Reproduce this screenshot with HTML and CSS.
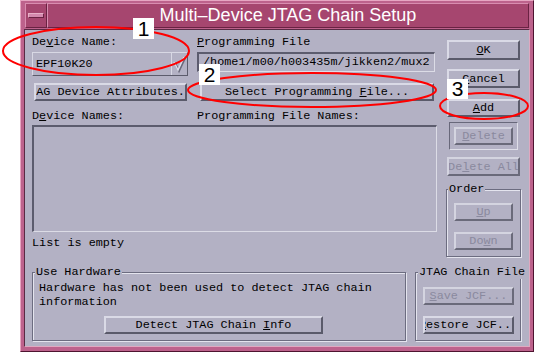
FILE: index.html
```html
<!DOCTYPE html>
<html lang="en">
<head>
    <meta charset="UTF-8">
    <title>Multi-Device JTAG Chain Setup</title>
    <link rel="stylesheet" href="styles.css">
</head>
<body>

<div class="window">
    <div class="titlebar">
        <div class="menu-btn"><span class="menu-bar"></span></div>
        <div class="title">Multi–Device JTAG Chain Setup</div>
    </div>
    <div class="client">
        <div class="top">
            <div class="main">
                <div class="pair">
                    <span>De<u>v</u>ice Name:</span>
                    <span><u>P</u>rogramming File</span>
                </div>
                <div class="pair fields">
                    <div class="combo">
                        <span class="combo-text">EPF10K20</span>
                        <span class="combo-arrow">
                            <svg width="13" height="20" viewBox="0 0 13 20">
                                <polyline points="2,9 6,17 12,4" fill="none" stroke="#6a6a7c" stroke-width="2"/>
                                <polyline points="1,8 5,16 11,3" fill="none" stroke="#dcdce8" stroke-width="1.5"/>
                            </svg>
                        </span>
                    </div>
                    <div class="field">/home1/m00/h003435m/jikken2/mux2</div>
                </div>
                <div class="pair actions">
                    <button class="btn attr"><span>JTAG Device Attributes...</span></button>
                    <button class="btn select"><span>Select Programming <u>F</u>ile...</span></button>
                </div>
                <div class="pair names">
                    <span>D<u>e</u>vice Names:</span>
                    <span>Programming File Names:</span>
                </div>
                <div class="listbox"></div>
                <div class="status">List is empty</div>
            </div>
            <div class="side">
                <button class="btn ok"><span><u>O</u>K</span></button>
                <button class="btn cancel"><span><u>C</u>ancel</span></button>
                <button class="btn add"><span><u>A</u>dd</span></button>
                <div class="default-frame">
                    <button class="btn" disabled><span><u>D</u>elete</span></button>
                </div>
                <button class="btn delete-all" disabled><span>De<u>l</u>ete All</span></button>
                <fieldset class="group order">
                    <legend>Order</legend>
                    <button class="btn up" disabled><span><u>U</u>p</span></button>
                    <button class="btn down" disabled><span>Do<u>w</u>n</span></button>
                </fieldset>
            </div>
        </div>
        <div class="bottom">
            <fieldset class="group hw">
                <legend>Use Hardware</legend>
                <p>Hardware has not been used to detect JTAG chain information</p>
                <button class="btn detect"><span>Detect JTAG Chain <u>I</u>nfo</span></button>
            </fieldset>
            <fieldset class="group jcf">
                <legend>JTAG Chain File</legend>
                <button class="btn save" disabled><span><u>S</u>ave JCF...</span></button>
                <button class="btn restore"><span><u>R</u>estore JCF...</span></button>
            </fieldset>
        </div>
    </div>
</div>

<svg class="marks" width="536" height="356" viewBox="0 0 536 356">
    <g fill="none" stroke="#ff0000" stroke-width="2">
        <ellipse cx="96" cy="51" rx="93" ry="24"/>
        <ellipse cx="312" cy="90" rx="124" ry="17"/>
        <ellipse cx="484" cy="106" rx="44" ry="13"/>
    </g>
    <g class="tag">
        <rect x="133" y="18" width="21" height="21"/>
        <text x="143.5" y="36">1</text>
        <rect x="199" y="64" width="21" height="21"/>
        <text x="209.5" y="82">2</text>
        <rect x="447" y="79" width="21" height="20"/>
        <text x="457.5" y="96">3</text>
    </g>
</svg>

</body>
</html>
```

FILE: styles.css
```css
body {
    margin: 0;
    background: #fff;
    font-family: "Liberation Mono", "DejaVu Sans Mono", monospace;
    font-size: 11.8px;
    line-height: 14px;
    color: #000;
}
u {
    text-underline-offset: 1px;
}
.window {
    width: 514px;
    height: 352px;
    margin-left: 20px;
    box-sizing: border-box;
    background: #bd628c;
    border: 1px solid;
    border-color: #e6a6c2 #4e1430 #4e1430 #e6a6c2;
    padding: 2px 3px 4px;
    display: flex;
    flex-direction: column;
}
.titlebar {
    height: 25px;
    margin: 0 1px 1px;
    display: flex;
    background: #a6466f;
}
.menu-btn {
    width: 22px;
    box-sizing: border-box;
    border: 1px solid;
    border-color: #d98db0 #6a2242 #6a2242 #d98db0;
    display: flex;
    align-items: center;
    justify-content: center;
}
.menu-bar {
    width: 14px;
    height: 3px;
    background: #d48aae;
    border: 1px solid;
    border-color: #e8b0c8 #6a2242 #6a2242 #e8b0c8;
}
.title {
    flex: 1;
    text-align: center;
    color: #fff;
    font: 18px/23px "Liberation Sans", Arial, sans-serif;
    border: 1px solid;
    border-color: #d98db0 #6a2242 #6a2242 #d98db0;
}
.client {
    flex: 1;
    background: #b3b1c4;
    border: 1px solid;
    border-color: #5a2a44 #e0a8c0 #e0a8c0 #5a2a44;
    padding: 5px 8px 0 7px;
}
.top {
    display: flex;
    gap: 9px;
}
.main {
    width: 405px;
}
.side {
    width: 75px;
    display: flex;
    flex-direction: column;
}
.pair {
    display: grid;
    grid-template-columns: 156px 238px;
    column-gap: 9px;
    align-items: start;
}
.fields {
    margin-top: 3px;
}
.combo {
    height: 24px;
    box-sizing: border-box;
    display: flex;
    border: 1px solid;
    border-color: #d8d8e4 #5c5c6c #5c5c6c #d8d8e4;
}
.combo-text {
    flex: 1;
    padding-left: 3px;
    line-height: 22px;
}
.combo-arrow {
    width: 15px;
    border-left: 1px solid #d8d8e4;
    display: flex;
    align-items: center;
    justify-content: center;
}
.field {
    height: 20px;
    box-sizing: border-box;
    border-style: solid;
    border-width: 2px 1px 1px 2px;
    border-color: #5c5c6e #dcdce6 #dcdce6 #5c5c6e;
    padding-left: 4px;
    line-height: 16px;
    white-space: nowrap;
    overflow: hidden;
}
.btn {
    height: 18px;
    box-sizing: border-box;
    padding: 0;
    border: 2px solid;
    border-color: #dadae6 #5a5a6a #5a5a6a #dadae6;
    background: #b3b1c4;
    font: inherit;
    color: #000;
    display: flex;
    align-items: center;
    justify-content: center;
    overflow: hidden;
    white-space: nowrap;
}
.btn:disabled {
    color: #8a899e;
    border-color: #d4d4e0 #6a6a7a #6a6a7a #d4d4e0;
}
.actions {
    margin-top: 7px;
}
.attr {
    width: 153px;
    margin-left: 2px;
}
.select {
    width: 234px;
    margin-left: 3px;
}
.names {
    margin-top: 8px;
}
.listbox {
    margin-top: 2px;
    height: 107px;
    box-sizing: border-box;
    border-style: solid;
    border-width: 2px 1px 1px 2px;
    border-color: #5c5c6e #dcdce6 #dcdce6 #5c5c6e;
}
.status {
    margin-top: 4px;
}
.side > .btn {
    margin: 0 1px;
}
.side > .ok {
    margin-top: 5px;
    height: 20px;
}
.side > .cancel {
    margin-top: 9px;
    height: 19px;
}
.side > .add {
    margin-top: 11px;
}
.default-frame {
    margin: 5px 3px 0;
    border: 1px solid;
    border-color: #68687a #dedee8 #dedee8 #68687a;
    padding: 4px;
}
.default-frame .btn {
    width: 100%;
}
.side > .delete-all {
    margin-top: 7px;
    height: 19px;
}
.group {
    margin: 0;
    min-width: 0;
    box-sizing: border-box;
    border: 1px solid #6c6c80;
    box-shadow: inset 1px 1px 0 #e4e4ee, 1px 1px 0 #e4e4ee;
}
.group legend {
    padding: 0 1px;
    line-height: 14px;
    background: #b3b1c4;
    white-space: nowrap;
}
.order {
    margin-top: 6px;
    padding: 0 7px 6px;
}
.order legend {
    margin-left: -6px;
}
.order .btn {
    width: 100%;
}
.up {
    margin-top: 7px;
}
.down {
    margin-top: 11px;
}
.bottom {
    display: flex;
    gap: 9px;
    margin-top: 8px;
}
.hw {
    width: 374px;
    padding: 0 6px 6px;
}
.hw legend {
    margin-left: -4px;
}
.hw p {
    margin: 2px 0 0;
}
.detect {
    margin: 7px 0 0 65px;
    width: 219px;
}
.jcf {
    width: 106px;
    padding: 0 6px 6px 7px;
}
.jcf legend {
    margin-left: -5px;
}
.jcf .btn {
    width: 91px;
}
.save {
    margin-top: 8px;
}
.restore {
    margin-top: 11px;
}
.marks {
    position: absolute;
    top: 0;
    left: 0;
    pointer-events: none;
}
.tag rect {
    fill: #fff;
}
.tag text {
    font: 21px "Liberation Sans", Arial, sans-serif;
    text-anchor: middle;
    fill: #000;
}
```
